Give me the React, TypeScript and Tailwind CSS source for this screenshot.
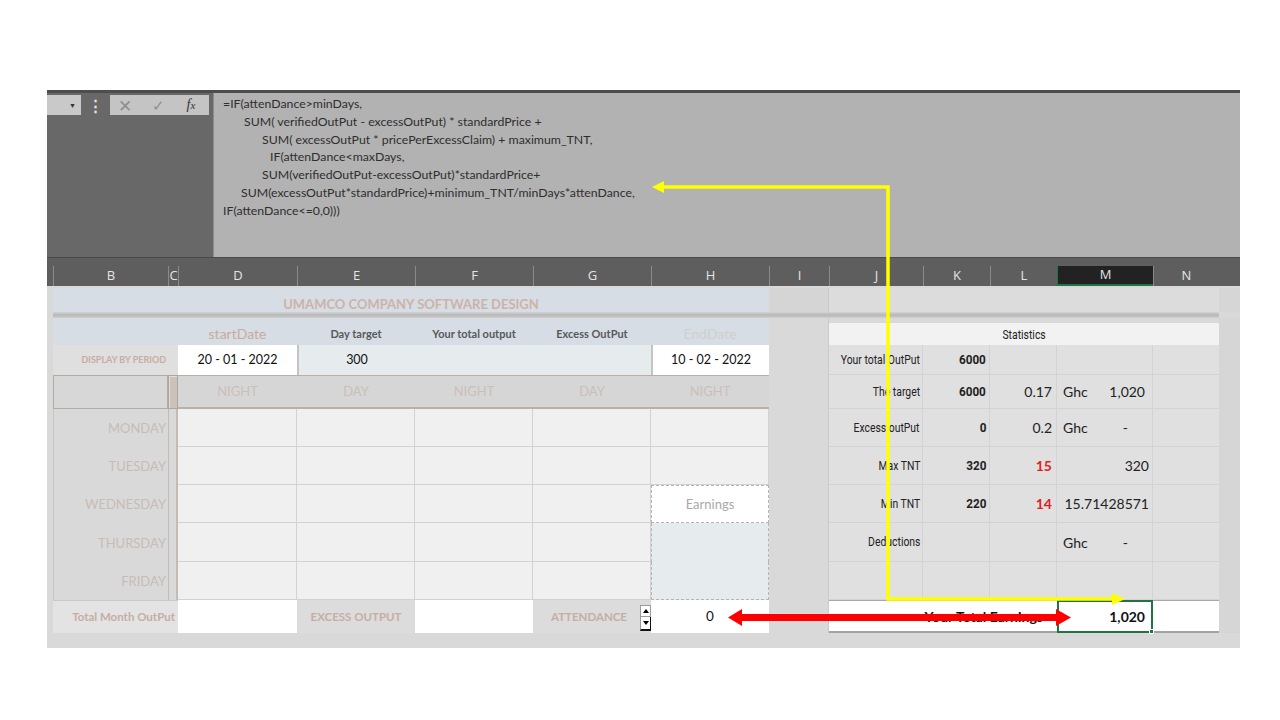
import React from 'react';

const formulaLines: { text: string; indent: string }[] = [
  { text: '=IF(attenDance>minDays,', indent: 'pl-0' },
  { text: 'SUM( verifiedOutPut - excessOutPut) * standardPrice +', indent: 'pl-[21px]' },
  { text: 'SUM( excessOutPut * pricePerExcessClaim) + maximum_TNT,', indent: 'pl-[39px]' },
  { text: 'IF(attenDance<maxDays,', indent: 'pl-[47px]' },
  { text: 'SUM(verifiedOutPut-excessOutPut)*standardPrice+', indent: 'pl-[39px]' },
  { text: 'SUM(excessOutPut*standardPrice)+minimum_TNT/minDays*attenDance,', indent: 'pl-[18px]' },
  { text: 'IF(attenDance<=0,0)))', indent: 'pl-0' },
];

const headers = [
  { l: '', w: 'w-[6px]' },
  { l: 'B', w: 'w-[115px]' },
  { l: 'C', w: 'w-[10px]' },
  { l: 'D', w: 'w-[119px]' },
  { l: 'E', w: 'w-[118px]' },
  { l: 'F', w: 'w-[118px]' },
  { l: 'G', w: 'w-[118px]' },
  { l: 'H', w: 'w-[118px]' },
  { l: 'I', w: 'w-[60px]' },
  { l: 'J', w: 'w-[94px]' },
  { l: 'K', w: 'w-[67px]' },
  { l: 'L', w: 'w-[67px]' },
  { l: 'M', w: 'w-[96px]' },
  { l: 'N', w: 'w-[66px]' },
  { l: '', w: 'w-[21px]' },
];

// condensed look for the statistics labels
const narrow = "inline-block whitespace-nowrap font-['Roboto',sans-serif] text-[13px]";

// right block: J..N of the statistics table
function Stats({
  label,
  k,
  l,
  lRed,
  ghc,
  m,
  mPad = 'pr-[7px]',
}: {
  label?: string;
  k?: string;
  l?: string;
  lRed?: boolean;
  ghc?: boolean;
  m?: string;
  mPad?: string;
}) {
  return (
    <>
      <div className="w-[94px] shrink-0 bg-[#e0e0e0] border-r border-b border-[#d3d3d3] flex items-center justify-end pr-[2px] text-[#222]">
        {label && <span className={`${narrow} origin-right scale-x-[0.8]`}>{label}</span>}
      </div>
      <div className="w-[67px] shrink-0 bg-[#e0e0e0] border-r border-b border-[#d3d3d3] flex items-center justify-end pr-[3px] text-[#222]">
        {k && <span className={`${narrow} origin-right font-bold scale-x-[0.9]`}>{k}</span>}
      </div>
      <div
        className={`w-[67px] shrink-0 bg-[#e0e0e0] border-r border-b border-[#d3d3d3] flex items-center justify-end pr-[4px] text-[14px] ${
          lRed ? 'text-[#e0201b] font-bold' : 'text-[#222]'
        }`}
      >
        {l}
      </div>
      <div className="w-[96px] shrink-0 bg-[#e0e0e0] border-r border-b border-[#d3d3d3] flex items-center text-[14px] text-[#222] relative">
        {ghc && <span className="absolute left-[6px]">Ghc</span>}
        <span className={`ml-auto ${mPad}`}>{m}</span>
      </div>
      <div className="w-[66px] shrink-0 bg-[#e0e0e0] border-b border-[#d3d3d3]" />
      <div className="w-[21px] shrink-0 bg-[#d6d6d6]" />
    </>
  );
}

function GridCell() {
  return <div className="w-[118px] shrink-0 bg-[#f0f0f0] border-r border-b border-[#d2d2d2]" />;
}

function DayRow({ day, hCell }: { day: string; hCell: React.ReactNode }) {
  return (
    <>
      <div className="w-[6px] shrink-0" />
      <div className="w-[115px] shrink-0 border-l border-[#c6c6c6] flex items-center justify-end pr-[2px] pt-[2px] text-[13px] text-[#c8bcb6]">
        {day}
      </div>
      <div className="w-[10px] shrink-0 border-l border-r-2 border-[#c4bcb4]" />
      <div className="w-[119px] shrink-0 bg-[#f0f0f0] border-r border-b border-[#d2d2d2]" />
      <GridCell />
      <GridCell />
      <GridCell />
      {hCell}
      <div className="w-[60px] shrink-0 border-r border-[#cacaca]" />
    </>
  );
}

function Arrows() {
  return (
    <svg className="absolute left-0 top-0 pointer-events-none" width="1280" height="720" viewBox="0 0 1280 720">
      <polyline points="662,187 888,187 888,599 1114,599" fill="none" stroke="#ffff00" strokeWidth="3.5" />
      <polygon points="652,187 664,181 664,193" fill="#ffff00" />
      <polygon points="1125,599 1112,593 1112,605" fill="#ffff00" />
      <rect x="740" y="614" width="318" height="7" fill="#ff0000" />
      <polygon points="728,617.5 742,609 742,626" fill="#ff0000" />
      <polygon points="1071,617.5 1056,609 1056,626" fill="#ff0000" />
    </svg>
  );
}

export default function App() {
  return (
    <div className="w-[1280px] h-[720px] bg-white relative overflow-hidden font-['Lato',sans-serif]">
      <div className="pt-[90px] pl-[47px]">
        <div className="w-[1193px]">
          {/* formula bar */}
          <div className="flex h-[167px] border-t-[3px] border-[#4d4d4d]">
            <div className="w-[166px] shrink-0 bg-[#686868] pt-[2px]">
              <div className="flex items-center h-[20px]">
                <div className="w-[34px] h-[20px] bg-[#c9c9c9] flex items-center justify-end pr-[5px]">
                  <span className="text-[7px] text-[#333]">▼</span>
                </div>
                <div className="w-[29px] flex justify-center text-[15px] font-bold text-[#e6e6e6] leading-none">⋮</div>
                <div className="w-[99px] h-[20px] bg-[#c4c4c4] flex items-center">
                  <span className="w-[30px] text-center text-[17px] text-[#8f8f8f] leading-none">✕</span>
                  <span className="w-[36px] text-center text-[15px] text-[#8f8f8f] leading-none">✓</span>
                  <span className="w-[30px] text-center text-[14px] italic font-['Liberation_Serif',serif] text-[#333] leading-none">
                    f<span className="text-[11px]">x</span>
                  </span>
                </div>
              </div>
            </div>
            <div className="flex-1 bg-[#b2b2b2] border-l border-[#8c8c8c] pl-[9px] pt-[2px] text-[12.3px] leading-[17.8px] text-[#2e2e2e]">
              {formulaLines.map((f, i) => (
                <div key={i} className={`${f.indent} whitespace-pre`}>
                  {f.text}
                </div>
              ))}
            </div>
          </div>

          {/* column headers */}
          <div className="flex h-[29px] bg-[#5e5e5e] items-end border-t border-[#4a4a4a]">
            {headers.map((c, i) => (
              <div
                key={i}
                className={`${c.w} shrink-0 h-[20px] flex items-center justify-center text-[13px] text-[#e4e4e4] font-['Open_Sans',sans-serif] overflow-hidden ${
                  c.l === 'M' ? 'bg-[#222] border-b-2 border-[#217346]' : ''
                } ${c.l ? 'border-l border-[#8a8a8a]' : ''}`}
              >
                {c.l}
              </div>
            ))}
          </div>

          {/* sheet */}
          <div className="bg-[#d9d9d9] h-[362px]">
            <div className="h-[2px]" />
            {/* title row */}
            <div className="flex h-[24px]">
              <div className="w-[6px] shrink-0" />
              <div className="w-[716px] shrink-0 bg-[#d6dde4] flex items-start justify-center pt-[10px] leading-none text-[13px] font-bold text-[#cdb3a7]">
                UMAMCO COMPANY SOFTWARE DESIGN
              </div>
              <div className="w-[60px] shrink-0 bg-[#d5d5d5] border-r border-[#cacaca]" />
              <div className="w-[390px] shrink-0 bg-[#dcdcdc]" />
              <div className="w-[21px] shrink-0 bg-[#d6d6d6]" />
            </div>
            {/* shadow band */}
            <div className="flex h-[6px]">
              <div className="w-[6px] shrink-0" />
              <div className="w-[1166px] shrink-0 bg-gradient-to-b from-[#d4d4d4] via-[#b7b7b7] to-[#cfcfcf]" />
            </div>
            {/* header row */}
            <div className="flex h-[27px]">
              <div className="w-[6px] shrink-0" />
              <div className="w-[125px] shrink-0 bg-[#d6dde4]" />
              <div className="w-[119px] shrink-0 bg-[#d6dde4] flex items-end justify-center pb-[1px] text-[14px] text-[#c9ab9d]">startDate</div>
              <div className="w-[118px] shrink-0 bg-[#d6dde4] flex items-end justify-center pb-[3px] text-[11px] font-bold text-[#595959]">Day target</div>
              <div className="w-[118px] shrink-0 bg-[#d6dde4] flex items-end justify-center pb-[3px] text-[11px] font-bold text-[#595959]">Your total output</div>
              <div className="w-[118px] shrink-0 bg-[#d6dde4] flex items-end justify-center pb-[3px] text-[11px] font-bold text-[#595959]">Excess OutPut</div>
              <div className="w-[118px] shrink-0 bg-[#d6dde4] flex items-end justify-center pb-[1px] text-[14px] text-[#cfcfcf]">EndDate</div>
              <div className="w-[60px] shrink-0 border-r border-[#cacaca]" />
              <div className="w-[390px] shrink-0 h-[22px] self-end bg-[#f2f2f2] flex items-center justify-center pt-[1px] text-[#222]">
                <span className={`${narrow} origin-center scale-x-[0.8]`}>Statistics</span>
              </div>
              <div className="w-[21px] shrink-0 bg-[#d6d6d6]" />
            </div>
            {/* display row */}
            <div className="flex h-[30px]">
              <div className="w-[6px] shrink-0" />
              <div className="w-[125px] shrink-0 bg-[#dfdfdf] flex items-center justify-end pr-[12px] text-[9px] font-bold text-[#c6ada2]">
                DISPLAY BY PERIOD
              </div>
              <div className="w-[119px] shrink-0 bg-white flex items-center justify-center text-[12.5px] text-[#111]">20 - 01 - 2022</div>
              <div className="w-[118px] shrink-0 bg-[#e6ebee] border-l-2 border-[#c4c4c4] flex items-center justify-center text-[12.5px] text-[#111]">300</div>
              <div className="w-[118px] shrink-0 bg-[#e6ebee]" />
              <div className="w-[118px] shrink-0 bg-[#e6ebee]" />
              <div className="w-[118px] shrink-0 bg-white border-l-2 border-[#c4c4c4] flex items-center justify-center text-[12.5px] text-[#111]">10 - 02 - 2022</div>
              <div className="w-[60px] shrink-0 border-r border-[#cacaca]" />
              <Stats label="Your total OutPut" k="6000" />
            </div>
            {/* night/day row */}
            <div className="flex h-[34px]">
              <div className="w-[6px] shrink-0" />
              <div className="w-[115px] shrink-0 bg-[#d7d7d7] border border-[#b3aba3]" />
              <div className="w-[10px] shrink-0 bg-[#cbc3bb] border border-[#aea69e] shadow-[inset_1px_1px_0_#e4ded8]" />
              <div className="w-[119px] shrink-0 bg-[#d6d6d6] border-t border-b-2 border-[#b9b1a9] flex items-center justify-center text-[13px] text-[#cbbfba]">NIGHT</div>
              <div className="w-[118px] shrink-0 bg-[#d6d6d6] border-t border-b-2 border-[#b9b1a9] flex items-center justify-center text-[13px] text-[#cbbfba]">DAY</div>
              <div className="w-[118px] shrink-0 bg-[#d6d6d6] border-t border-b-2 border-[#b9b1a9] flex items-center justify-center text-[13px] text-[#cbbfba]">NIGHT</div>
              <div className="w-[118px] shrink-0 bg-[#d6d6d6] border-t border-b-2 border-[#b9b1a9] flex items-center justify-center text-[13px] text-[#cbbfba]">DAY</div>
              <div className="w-[118px] shrink-0 bg-[#d6d6d6] border-t border-b-2 border-[#b9b1a9] flex items-center justify-center text-[13px] text-[#cbbfba]">NIGHT</div>
              <div className="w-[60px] shrink-0 border-r border-[#cacaca]" />
              <Stats label="The target" k="6000" l="0.17" ghc m="1,020" />
            </div>
            {/* day rows */}
            <div className="flex h-[38px]">
              <DayRow day="MONDAY" hCell={<GridCell />} />
              <Stats label="Excess outPut" k="0" l="0.2" ghc m="-" mPad="pr-[24px]" />
            </div>
            <div className="flex h-[38px]">
              <DayRow day="TUESDAY" hCell={<GridCell />} />
              <Stats label="Max TNT" k="320" l="15" lRed m="320" mPad="pr-[3px]" />
            </div>
            <div className="flex h-[38px]">
              <DayRow
                day="WEDNESDAY"
                hCell={
                  <div className="w-[118px] shrink-0 bg-white border border-dashed border-[#b5b5b5] flex items-center justify-center pt-[2px] text-[13px] text-[#a9a9a9]">
                    Earnings
                  </div>
                }
              />
              <Stats label="Min TNT" k="220" l="14" lRed m="15.71428571" mPad="pr-[3px]" />
            </div>
            <div className="flex h-[39px]">
              <DayRow
                day="THURSDAY"
                hCell={<div className="w-[118px] shrink-0 bg-[#e6ebee] border-x border-dashed border-[#b5b5b5]" />}
              />
              <Stats label="Deductions" ghc m="-" mPad="pr-[24px]" />
            </div>
            <div className="flex h-[38px]">
              <DayRow
                day="FRIDAY"
                hCell={<div className="w-[118px] shrink-0 bg-[#e6ebee] border-x border-b border-dashed border-[#b5b5b5]" />}
              />
              <Stats />
            </div>
            {/* totals row */}
            <div className="flex h-[33px]">
              <div className="w-[6px] shrink-0" />
              <div className="w-[125px] shrink-0 bg-[#e3e3e3] flex items-center justify-end pr-[3px] text-[11.5px] font-bold text-[#c5aea4] border-t border-[#c8c8c8]">
                Total Month OutPut
              </div>
              <div className="w-[119px] shrink-0 bg-white" />
              <div className="w-[118px] shrink-0 bg-[#dcdcdc] flex items-center justify-center text-[11.5px] font-bold text-[#c5aea4]">EXCESS OUTPUT</div>
              <div className="w-[118px] shrink-0 bg-white" />
              <div className="w-[118px] shrink-0 bg-[#dcdcdc] flex items-center justify-end text-[11.5px] font-bold text-[#c5aea4] relative">
                <span className="pr-[24px]">ATTENDANCE</span>
                {/* spin button */}
                <div className="absolute right-0 top-[5px] w-[11px] h-[26px] flex flex-col">
                  <div className="h-[12px] bg-white border border-[#9a9a9a] flex items-center justify-center">
                    <span className="block w-0 h-0 border-x-[3px] border-x-transparent border-b-[4px] border-b-black" />
                  </div>
                  <div className="h-[14px] bg-white border-x border-b-2 border-[#111] border-l-[#9a9a9a] flex items-center justify-center">
                    <span className="block w-0 h-0 border-x-[3px] border-x-transparent border-t-[4px] border-t-black" />
                  </div>
                </div>
              </div>
              <div className="w-[118px] shrink-0 bg-white flex items-center justify-center text-[13.5px] text-[#111]">0</div>
              <div className="w-[60px] shrink-0 border-r border-[#cacaca]" />
              <div className="w-[228px] shrink-0 bg-white border-t border-[#a8a8a8] border-b-2 border-b-[#a3a3a3] flex items-center justify-end pr-[14px] text-[14px] font-bold text-[#111]">
                Your Total Earnings
              </div>
              <div className="w-[96px] shrink-0 bg-white border-2 border-[#217346] flex items-center justify-end pr-[6px] text-[14px] font-bold text-[#111] relative">
                1,020
                <span className="absolute -right-[3px] -bottom-[3px] w-[5px] h-[5px] bg-[#217346] border border-white" />
              </div>
              <div className="w-[66px] shrink-0 bg-white border-t border-[#a8a8a8] border-b-2 border-b-[#a3a3a3]" />
              <div className="w-[21px] shrink-0 bg-[#d6d6d6]" />
            </div>
          </div>
        </div>
      </div>
      <Arrows />
    </div>
  );
}
